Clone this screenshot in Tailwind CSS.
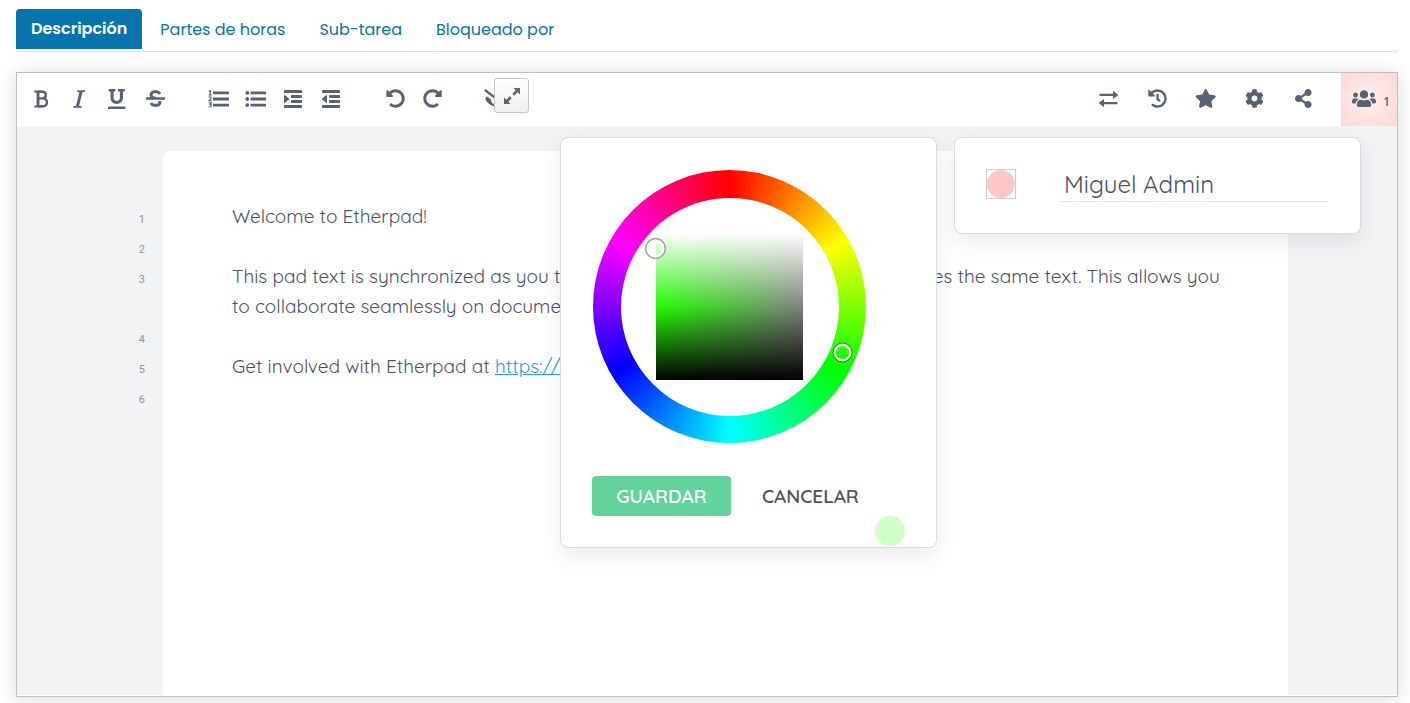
<!DOCTYPE html>
<html lang="es">
<head>
<meta charset="utf-8">
<title>Descripción</title>
<script src="https://cdn.jsdelivr.net/npm/@tailwindcss/browser@4"></script>
</head>
<body class="flex h-screen flex-col overflow-hidden bg-white px-4 pt-2 pb-[6px] pr-3 font-['Poppins','Open_Sans',sans-serif] text-base">

<nav class="flex h-11 shrink-0 items-start gap-0.5 border-b border-[#dee2e6] pt-px" aria-label="Secciones">
  <a href="#" class="flex h-10 items-center rounded-t bg-[#0874ab] px-[15px] font-semibold text-white" aria-current="page">Descripción</a>
  <a href="#" class="flex h-10 items-center px-4 pt-0.5 text-[#0874ab]">Partes de horas</a>
  <a href="#" class="flex h-10 items-center px-4 pt-0.5 text-[#0874ab]">Sub-tarea</a>
  <a href="#" class="flex h-10 items-center px-4 pt-0.5 text-[#0874ab]">Bloqueado por</a>
</nav>

<main class="relative mt-5 flex min-h-0 flex-1 flex-col border border-[#c0c0c0] bg-white pb-px font-['Quicksand','Open_Sans',sans-serif] text-[#485365] shadow-[0_2px_18px_rgba(0,0,0,0.14)]">

  <div class="flex h-[53px] shrink-0 items-stretch justify-between text-[#576273]">
    <div class="flex items-center gap-[26px] pb-0.5 pl-1.5">
      <div class="flex">
        <button class="flex h-[50px] w-[37px] items-center justify-center" aria-label="Negrita"><svg class="h-[18px]" viewBox="0 0 15 18" fill="none" stroke="currentColor"><path d="M.3 1.500H8.500M.3 16.500H9" stroke-width="2"/><path d="M4 1.500V16.500" stroke-width="2.900"/><path d="M4 1.700H8.300C13 1.700 13 8.400 8.300 8.400H4M8.300 8.400C14.500 8.400 14.500 16.300 8.600 16.300H4" stroke-width="2.400"/></svg></button>
        <button class="flex h-[50px] w-[38px] items-center justify-center" aria-label="Cursiva"><svg class="h-5" viewBox="0 0 320 512" fill="currentColor"><path d="M312 40v24a14 14 0 0 1-14 14h-56l-86 356h48a14 14 0 0 1 14 14v18a14 14 0 0 1-14 14H22a14 14 0 0 1-14-14v-18a14 14 0 0 1 14-14h56l86-356h-42a14 14 0 0 1-14-14V46a14 14 0 0 1 14-14h176a14 14 0 0 1 14 8z"/></svg></button>
        <button class="flex h-[50px] w-[38px] items-center justify-center" aria-label="Subrayado"><svg class="h-5" viewBox="0 0 448 512" fill="currentColor"><path d="M32 64h32v160c0 88.22 71.78 160 160 160s160-71.78 160-160V64h32a16 16 0 0 0 16-16V16a16 16 0 0 0-16-16H272a16 16 0 0 0-16 16v32a16 16 0 0 0 16 16h32v160a80 80 0 0 1-160 0V64h32a16 16 0 0 0 16-16V16a16 16 0 0 0-16-16H32a16 16 0 0 0-16 16v32a16 16 0 0 0 16 16zm400 384H16a16 16 0 0 0-16 16v32a16 16 0 0 0 16 16h416a16 16 0 0 0 16-16v-32a16 16 0 0 0-16-16z"/></svg></button>
        <button class="flex h-[50px] w-[38px] items-center justify-center" aria-label="Tachado"><svg class="h-[19px]" viewBox="0 0 512 512" fill="currentColor"><path d="M496 224H293.9l-87.17-26.83A43.55 43.55 0 0 1 219.55 112h66.79A49.89 49.89 0 0 1 331 139.58a16 16 0 0 0 21.46 7.15l42.94-21.47a16 16 0 0 0 7.16-21.46l-.53-1A128 128 0 0 0 287.51 32h-68a123.68 123.68 0 0 0-123 135.64c2 20.89 10.1 39.83 21.78 56.36H16a16 16 0 0 0-16 16v32a16 16 0 0 0 16 16h480a16 16 0 0 0 16-16v-32a16 16 0 0 0-16-16zm-180.24 96A43 43 0 0 1 336 356.45 43.59 43.59 0 0 1 292.45 400h-66.79A49.89 49.89 0 0 1 181 372.42a16 16 0 0 0-21.46-7.15l-42.94 21.47a16 16 0 0 0-7.16 21.46l.53 1A128 128 0 0 0 224.49 480h68a123.68 123.68 0 0 0 123-135.64 114.25 114.25 0 0 0-5.34-24.36z"/></svg></button>
      </div>
      <div class="flex">
        <button class="flex h-[50px] w-[37px] items-center justify-center" aria-label="Lista ordenada"><svg class="w-[21px]" viewBox="0 0 21 18" fill="currentColor"><rect x="5" y="1.5" width="16" height="2.8" rx=".5"/><rect x="5" y="7.6" width="16" height="2.8" rx=".5"/><rect x="5" y="13.7" width="16" height="2.8" rx=".5"/><path d="M.8 1.2 2.2.6v4.2M.7 4.9h3M.7 7.2c2-.9 3 .2 2.2 1.2L.8 10.8h3M.7 12.9h2.6l-1.2 1.6c2 0 1.8 2.7-1.4 2.2" fill="none" stroke="currentColor" stroke-width="1.1"/></svg></button>
        <button class="flex h-[50px] w-[37px] items-center justify-center" aria-label="Lista con viñetas"><svg class="w-[21px]" viewBox="0 0 21 18" fill="currentColor"><rect x="5.500" y="1.500" width="15.500" height="2.800" rx=".5"/><rect x="5.500" y="7.600" width="15.500" height="2.800" rx=".5"/><rect x="5.500" y="13.700" width="15.500" height="2.800" rx=".5"/><circle cx="2.300" cy="2.900" r="1.900"/><circle cx="2.300" cy="9" r="1.900"/><circle cx="2.300" cy="15.100" r="1.900"/></svg></button>
        <button class="flex h-[50px] w-[38px] items-center justify-center" aria-label="Aumentar sangría"><svg class="w-[18px]" viewBox="0 0 18 18" fill="currentColor"><rect y="0" width="18" height="2.900" rx=".4"/><rect x="7" y="5" width="11" height="2.900" rx=".4"/><rect x="7" y="10" width="11" height="2.900" rx=".4"/><rect y="15.100" width="18" height="2.900" rx=".4"/><path d="M0 5.300v7.400q0 .8.700.3L5 9.400q.4-.4 0-.8L.7 5Q0 4.500 0 5.300z"/></svg></button>
        <button class="flex h-[50px] w-[38px] items-center justify-center" aria-label="Reducir sangría"><svg class="w-[18px]" viewBox="0 0 18 18" fill="currentColor"><rect y="0" width="18" height="2.900" rx=".4"/><rect x="7" y="5" width="11" height="2.900" rx=".4"/><rect x="7" y="10" width="11" height="2.900" rx=".4"/><rect y="15.100" width="18" height="2.900" rx=".4"/><path d="M5 5.300v7.400q0 .8-.7.300L.2 9.400q-.4-.4 0-.8L4.300 5Q5 4.500 5 5.300z"/></svg></button>
      </div>
      <div class="flex">
        <button class="flex h-[50px] w-[38px] items-center justify-center" aria-label="Deshacer"><svg class="h-[19px]" viewBox="0 0 512 512" fill="currentColor"><path d="M255.545 8c-66.269.119-126.438 26.233-170.86 68.685L48.971 40.971C33.851 25.851 8 36.559 8 57.941V192c0 13.255 10.745 24 24 24h134.059c21.382 0 32.09-25.851 16.971-40.971l-41.75-41.750c30.864-28.899 70.801-44.907 113.23-45.273 92.398-.798 170.283 73.977 169.484 169.442C423.236 348.009 349.816 424 256 424c-41.127 0-79.997-14.678-110.63-41.556-4.743-4.161-11.906-3.908-16.368.553L89.34 422.659c-4.872 4.872-4.631 12.815.482 17.433C133.798 479.813 192.074 504 256 504c136.966 0 247.999-111.033 248-247.998C504.001 119.193 392.354 7.755 255.545 8z"/></svg></button>
        <button class="flex h-[50px] w-[37px] items-center justify-center" aria-label="Rehacer"><svg class="h-[19px]" viewBox="0 0 512 512" fill="currentColor"><path transform="matrix(-1 0 0 1 512 0)" d="M255.545 8c-66.269.119-126.438 26.233-170.86 68.685L48.971 40.971C33.851 25.851 8 36.559 8 57.941V192c0 13.255 10.745 24 24 24h134.059c21.382 0 32.09-25.851 16.971-40.971l-41.75-41.750c30.864-28.899 70.801-44.907 113.23-45.273 92.398-.798 170.283 73.977 169.484 169.442C423.236 348.009 349.816 424 256 424c-41.127 0-79.997-14.678-110.63-41.556-4.743-4.161-11.906-3.908-16.368.553L89.34 422.659c-4.872 4.872-4.631 12.815.482 17.433C133.798 479.813 192.074 504 256 504c136.966 0 247.999-111.033 248-247.998C504.001 119.193 392.354 7.755 255.545 8z"/></svg></button>
      </div>
      <button class="flex h-[50px] w-[38px] items-center justify-center" aria-label="Borrar colores de autoría"><svg class="h-5" viewBox="0 0 640 512" fill="currentColor"><path d="M320 400c-75.850 0-137.250-58.710-142.900-133.110L72.200 185.820c-13.790 17.300-26.480 35.590-36.720 55.590a32.350 32.350 0 0 0 0 29.190C89.710 376.410 197.070 448 320 448c26.910 0 52.870-4 77.890-10.460L346 397.390a144.130 144.130 0 0 1-26 2.610z"/><path d="M2 46 38-2l600 464-36 48z"/></svg></button>
    </div>

    <div class="flex items-center">
      <div class="flex pb-0.5">
      <button class="flex h-[50px] w-[49px] items-center justify-center" aria-label="Importar/Exportar"><svg class="w-[19px]" viewBox="0 0 19 16" fill="currentColor"><rect x=".5" y="2.800" width="15" height="2.200" rx=".4"/><path d="M14 .6q0-.8.700-.3l4 3.100q.5.500 0 1L14.700 7.500q-.7.500-.7-.3z"/><rect x="3.500" y="11" width="15" height="2.200" rx=".4"/><path d="M5 8.800q0-.8-.7-.3l-4 3.100q-.5.500 0 1l4 3.100q.7.500.7-.3z"/></svg></button>
      <button class="flex h-[50px] w-[48px] items-center justify-center" aria-label="Línea de tiempo"><svg class="h-[19px]" viewBox="0 0 512 512" fill="currentColor"><path d="M504 255.531c.253 136.640-111.180 248.372-247.820 248.468-59.015.042-113.223-20.530-155.822-54.911-11.077-8.940-11.905-25.541-1.839-35.607l11.267-11.267c8.609-8.609 22.353-9.551 31.891-1.984C173.062 425.135 212.781 440 256 440c101.705 0 184-82.311 184-184 0-101.705-82.311-184-184-184-48.814 0-93.149 18.969-126.068 49.932l50.754 50.754c10.080 10.080 2.941 27.314-11.313 27.314H24c-8.837 0-16-7.163-16-16V38.627c0-14.254 17.234-21.393 27.314-11.314l49.372 49.372C129.209 34.136 189.552 8 256 8c136.810 0 247.747 110.780 248 247.531zm-180.912 78.784l9.823-12.630c8.138-10.463 6.253-25.542-4.210-33.679L288 256.349V152c0-13.255-10.745-24-24-24h-16c-13.255 0-24 10.745-24 24v135.651l65.409 50.874c10.463 8.137 25.541 6.253 33.679-4.210z"/></svg></button>
      <button class="flex h-[50px] w-[49px] items-center justify-center" aria-label="Guardar revisión"><svg class="h-[19px]" viewBox="0 0 576 512" fill="currentColor"><path d="M259.300 17.800L194 150.200 47.900 171.500c-26.200 3.800-36.700 36.100-17.700 54.600l105.700 103-25 145.500c-4.500 26.300 23.200 46 46.400 33.700L288 439.600l130.700 68.700c23.200 12.200 50.900-7.400 46.400-33.700l-25-145.500 105.700-103c19-18.500 8.500-50.800-17.700-54.600L382 150.200 316.700 17.800c-11.700-23.600-45.600-23.900-57.400 0z"/></svg></button>
      <button class="flex h-[50px] w-[49px] items-center justify-center" aria-label="Configuración"><svg class="h-[19px]" viewBox="0 0 512 512" fill="currentColor"><path d="M487.400 315.700l-42.600-24.600c4.300-23.200 4.300-47 0-70.200l42.600-24.600c4.900-2.800 7.100-8.600 5.500-14-11.100-35.600-30-67.800-54.700-94.600-3.800-4.100-10-5.100-14.800-2.300L380.800 110c-17.900-15.400-38.500-27.300-60.800-35.100V25.800c0-5.600-3.900-10.500-9.400-11.700-36.700-8.200-74.300-7.800-109.200 0-5.500 1.200-9.400 6.100-9.400 11.700V75c-22.200 7.900-42.800 19.800-60.800 35.100L88.700 85.500c-4.900-2.800-11-1.900-14.800 2.300-24.700 26.700-43.600 58.900-54.700 94.600-1.700 5.400.6 11.200 5.500 14L67.300 221c-4.300 23.200-4.300 47 0 70.200l-42.600 24.600c-4.900 2.800-7.100 8.600-5.500 14 11.100 35.600 30 67.800 54.700 94.600 3.800 4.100 10 5.100 14.800 2.300l42.600-24.600c17.900 15.400 38.500 27.300 60.800 35.100v49.200c0 5.600 3.900 10.500 9.400 11.700 36.700 8.200 74.300 7.800 109.200 0 5.500-1.200 9.400-6.100 9.400-11.700v-49.200c22.200-7.900 42.800-19.800 60.800-35.100l42.600 24.600c4.900 2.800 11 1.900 14.800-2.300 24.700-26.700 43.600-58.900 54.700-94.600 1.500-5.500-.7-11.300-5.600-14.100zM256 336c-44.100 0-80-35.900-80-80s35.900-80 80-80 80 35.900 80 80-35.900 80-80 80z"/></svg></button>
      <button class="flex h-[50px] w-[49px] items-center justify-center" aria-label="Compartir"><svg class="h-[19px]" viewBox="0 0 448 512" fill="currentColor"><path d="M352 320c-22.608 0-43.387 7.819-59.790 20.895l-102.486-64.054a96.551 96.551 0 0 0 0-41.683l102.486-64.054C308.613 184.181 329.392 192 352 192c53.019 0 96-42.981 96-96S405.019 0 352 0s-96 42.981-96 96c0 7.158.790 14.130 2.276 20.841L155.790 180.895C139.387 167.819 118.608 160 96 160c-53.019 0-96 42.981-96 96s42.981 96 96 96c22.608 0 43.387-7.819 59.790-20.895l102.486 64.054A96.301 96.301 0 0 0 256 416c0 53.019 42.981 96 96 96s96-42.981 96-96-42.981-96-96-96z"/></svg></button>
      </div>
      <button class="ml-[13px] flex h-full w-14 items-center gap-2 bg-[radial-gradient(circle,#fff0f0_0%,#ffd6d4_100%)] pb-0.5 pl-[11px]" aria-label="Usuarios conectados"><svg class="w-6 shrink-0" viewBox="0 0 640 512" fill="currentColor"><path d="M96 224c35.300 0 64-28.700 64-64s-28.700-64-64-64-64 28.700-64 64 28.700 64 64 64zm448 0c35.300 0 64-28.700 64-64s-28.700-64-64-64-64 28.700-64 64 28.700 64 64 64zm32 32h-64c-17.600 0-33.500 7.100-45.100 18.600 40.300 22.100 68.900 62 75.100 109.400h66c17.700 0 32-14.300 32-32v-32c0-35.300-28.700-64-64-64zm-256 0c61.900 0 112-50.100 112-112S381.900 32 320 32 208 82.100 208 144s50.100 112 112 112zm76.800 32h-8.300c-20.800 10-43.900 16-68.500 16s-47.600-6-68.500-16h-8.300C179.600 288 128 339.600 128 403.200V432c0 26.500 21.500 48 48 48h288c26.500 0 48-21.500 48-48v-28.800c0-63.600-51.600-115.200-115.200-115.200zm-223.700-13.400C161.500 263.100 145.600 256 128 256H64c-35.300 0-64 28.700-64 64v32c0 17.700 14.300 32 32 32h65.900c6.300-47.400 34.900-87.300 75.200-109.400z"/></svg><span class="pt-1 text-[13px] leading-4 font-semibold">1</span></button>
    </div>
  </div>

  <button class="absolute top-[5px] left-[477px] flex size-[35px] items-center justify-center rounded-[3px] border border-[#c8c8c8] bg-linear-to-b from-white to-[#f0f0f0] text-[#666]" aria-label="Pantalla completa"><svg class="size-4" viewBox="0 0 16 16" fill="currentColor"><path d="M9.500 0H16v6.500l-2.300-2.200-3.400 3.400-2-2 3.400-3.400zM6.500 16H0V9.500l2.300 2.200 3.400-3.400 2 2-3.400 3.400z"/></svg></button>

  <section class="relative flex min-h-0 flex-1 bg-[#f1f3f4]">
    <div class="w-[146px] shrink-0 pt-[79px] pr-[18px] text-right font-['Roboto',sans-serif] text-[11px] leading-[30px] text-[#8f95a1]" aria-hidden="true">
      <div class="h-[30px]">1</div>
      <div class="h-[30px]">2</div>
      <div class="h-[60px]">3</div>
      <div class="h-[30px]">4</div>
      <div class="h-[30px]">5</div>
      <div class="h-[30px]">6</div>
    </div>
    <article class="mt-[25px] min-w-0 flex-1 rounded-t-lg bg-white pt-[50px] pr-14 pl-[69px] text-[19px] leading-[30px]">
      <p class="mb-[30px]">Welcome to Etherpad!</p>
      <p class="mb-[30px]">This pad text is synchronized as you type, so that everyone viewing this page sees the same text. This allows you to collaborate seamlessly on documents!</p>
      <p>Get involved with Etherpad at <a href="https://etherpad.org" class="text-[#2e96f3] underline">https://etherpad.org</a></p>
    </article>
    <div class="w-[109px] shrink-0"></div>

    <!-- Colour picker -->
    <div role="dialog" aria-label="Color" class="absolute top-[11px] right-[460px] w-[377px] rounded-lg border border-[#d8dbe0] bg-white pt-8 pb-px pl-[31px] shadow-[0_8px_20px_rgba(60,70,85,0.10)]">
      <div class="relative ml-px flex size-[273px] items-center justify-center rounded-full bg-[conic-gradient(#f00,#ff0,#0f0,#0ff,#00f,#f0f,#f00)]">
        <div class="flex size-[218px] items-center justify-center rounded-full bg-white">
          <div class="size-[147px] bg-[linear-gradient(to_bottom,#fff_0%,rgba(255,255,255,0)_50%,rgba(0,0,0,0)_50%,#000_100%),linear-gradient(to_right,#22ff00,#808080)]"></div>
        </div>
        <svg class="absolute top-[67px] left-[51px] size-[23px]" viewBox="0 0 23 23" fill="none"><circle cx="11.500" cy="11.500" r="9.800" stroke="#a9a9a9" stroke-width="1.800"/><circle cx="11.500" cy="11.500" r="7.700" stroke="#fff" stroke-width="2.400"/></svg>
        <svg class="absolute top-[171px] left-[238px] size-[23px]" viewBox="0 0 23 23" fill="none"><circle cx="11.500" cy="11.500" r="9.300" stroke="#000" stroke-opacity=".4" stroke-width="1.400"/><circle cx="11.500" cy="11.500" r="7.800" stroke="#fff" stroke-width="2.400"/></svg>
      </div>
      <div class="mt-[33px] flex h-10 text-[19px] font-semibold">
        <button class="w-[139px] rounded bg-[#64d29b] text-white">GUARDAR</button>
        <button class="px-[31px]">CANCELAR</button>
      </div>
      <div class="mr-[31px] ml-auto size-[30px] rounded-full bg-[#cfffc7]"></div>
    </div>

    <!-- Connected users -->
    <div class="absolute top-[11px] right-9 flex h-[97px] w-[407px] items-start rounded-lg border border-[#d8dbe0] bg-white pt-[31px] pr-8 pl-[31px] shadow-[0_8px_20px_rgba(60,70,85,0.10)]">
      <button class="flex size-[30px] shrink-0 items-center justify-center border border-[#ccc]" aria-label="Elegir color"><span class="size-7 rounded-full bg-[#ffc7c7]"></span></button>
      <input type="text" aria-label="Nombre" value="Miguel Admin" class="ml-11 h-[33px] min-w-0 flex-1 border-b border-[#e2e4e6] bg-transparent pb-0.5 pl-1 text-2xl leading-[30px] text-[#485365] outline-none">
    </div>
  </section>
</main>
</body>
</html>
